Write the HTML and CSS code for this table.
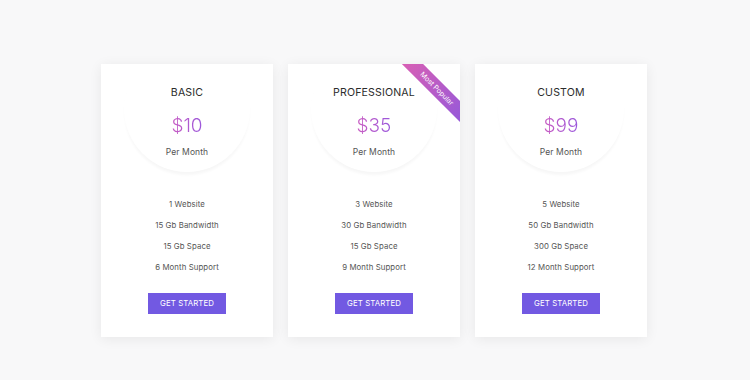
FILE: index.html
```html
<!DOCTYPE html>
<html>
<head>
<meta charset="utf-8">
<link rel="stylesheet" href="styles.css">
</head>
<body>
<main class="pricing">
  <section class="card">
    <header class="head">
      <h2 class="title">BASIC</h2>
      <div class="price">$10</div>
      <div class="period">Per Month</div>
    </header>
    <ul class="features">
      <li>1 Website</li>
      <li>15 Gb Bandwidth</li>
      <li>15 Gb Space</li>
      <li>6 Month Support</li>
    </ul>
    <a class="btn" href="#">GET STARTED</a>
  </section>
  <section class="card">
    <div class="ribbon">Most Popular</div>
    <header class="head">
      <h2 class="title">PROFESSIONAL</h2>
      <div class="price">$35</div>
      <div class="period">Per Month</div>
    </header>
    <ul class="features">
      <li>3 Website</li>
      <li>30 Gb Bandwidth</li>
      <li>15 Gb Space</li>
      <li>9 Month Support</li>
    </ul>
    <a class="btn" href="#">GET STARTED</a>
  </section>
  <section class="card">
    <header class="head">
      <h2 class="title">CUSTOM</h2>
      <div class="price">$99</div>
      <div class="period">Per Month</div>
    </header>
    <ul class="features">
      <li>5 Website</li>
      <li>50 Gb Bandwidth</li>
      <li>300 Gb Space</li>
      <li>12 Month Support</li>
    </ul>
    <a class="btn" href="#">GET STARTED</a>
  </section>
</main>
</body>
</html>
```
FILE: styles.css
```css
* { box-sizing: border-box; }
html, body { margin: 0; padding: 0; }
body {
  background: #f8f8f9;
  font-family: "Inter", "Open Sans", sans-serif;
  color: #333;
  width: 750px;
  height: 380px;
  overflow: hidden;
}
.pricing {
  display: flex;
  justify-content: center;
  gap: 15px;
  padding-top: 64px;
  padding-right: 2px;
}
.card {
  position: relative;
  width: 172px;
  height: 273px;
  background: #fff;
  box-shadow: 0 2px 12px rgba(0, 0, 0, 0.07);
  overflow: hidden;
  display: flex;
  flex-direction: column;
  align-items: center;
  padding: 22px 0 24px;
}
.head {
  position: relative;
  display: flex;
  flex-direction: column;
  align-items: center;
  width: 100%;
}
.head::before {
  content: "";
  position: absolute;
  left: 50%;
  top: -40px;
  width: 126px;
  height: 126px;
  margin-left: -63px;
  border-radius: 50%;
  background: #fff;
  box-shadow: 0 4px 3px -1px rgba(0, 0, 0, 0.035);
}
.head > * { position: relative; }
.title {
  margin: 0;
  font-size: 10.6px;
  line-height: 14px;
  font-weight: 400;
  letter-spacing: 0.15px;
  color: #2c2c2c;
}
.price {
  margin-top: 14px;
  font-size: 19px;
  line-height: 24px;
  font-weight: 300;
  background: linear-gradient(90deg, #c95cc2, #9a58dc);
  -webkit-background-clip: text;
  background-clip: text;
  color: transparent;
}
.period {
  margin-top: 8px;
  font-size: 8.5px;
  line-height: 12px;
  color: #555;
  letter-spacing: 0.1px;
}
.features {
  list-style: none;
  margin: 36px 0 0;
  padding: 0;
  text-align: center;
}
.features li {
  font-size: 7.8px;
  line-height: 21px;
  height: 21px;
  color: #555;
  letter-spacing: 0.1px;
}
.btn {
  margin-top: 15px;
  width: 78px;
  height: 21px;
  line-height: 21px;
  text-align: center;
  background: #7259e2;
  color: #fff;
  font-size: 7.8px;
  font-weight: 400;
  text-decoration: none;
  letter-spacing: 0.1px;
}
.ribbon {
  position: absolute;
  top: 17px;
  right: -29px;
  width: 104px;
  height: 15px;
  line-height: 15px;
  transform: rotate(45deg);
  background: linear-gradient(90deg, #e060b0, #8c58df);
  color: #fff;
  font-size: 7px;
  text-align: center;
  z-index: 2;
}
```
